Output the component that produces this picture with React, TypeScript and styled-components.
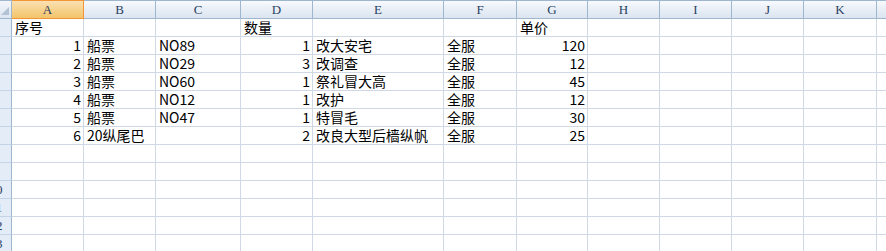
import styled, { createGlobalStyle } from "styled-components";

const GlobalStyle = createGlobalStyle`
  html, body {
    margin: 0;
    padding: 0;
    background: #ffffff;
    overflow: hidden;
  }
`;

// Column widths include the 1px gridline on the right edge
const COLUMNS = [
  { key: "A", width: 72 },
  { key: "B", width: 72 },
  { key: "C", width: 85 },
  { key: "D", width: 72 },
  { key: "E", width: 131 },
  { key: "F", width: 73 },
  { key: "G", width: 71 },
  { key: "H", width: 72 },
  { key: "I", width: 72 },
  { key: "J", width: 72 },
  { key: "K", width: 73 },
  { key: "L", width: 72 },
];

type CellValue = string | number | null;

const ROWS: CellValue[][] = [
  ["序号", null, null, "数量", null, null, "单价"],
  [1, "船票", "NO89", 1, "改大安宅", "全服", 120],
  [2, "船票", "NO29", 3, "改调查", "全服", 12],
  [3, "船票", "NO60", 1, "祭礼冒大高", "全服", 45],
  [4, "船票", "NO12", 1, "改护", "全服", 12],
  [5, "船票", "NO47", 1, "特冒毛", "全服", 30],
  [6, "20纵尾巴", null, 2, "改良大型后樯纵帆", "全服", 25],
];

const TOTAL_ROWS = 13;

const Sheet = styled.div`
  display: grid;
  grid-template-columns: 12px ${COLUMNS.map((c) => `${c.width}px`).join(" ")};
  grid-auto-rows: 18px;
  grid-template-rows: 19px;
  width: 886px;
  height: 251px;
  overflow: hidden;
  font-family: "Noto Sans CJK SC", "Noto Sans", sans-serif;
  font-size: 14px;
  color: #000000;
`;

const Corner = styled.div`
  box-sizing: border-box;
  display: flex;
  align-items: flex-end;
  justify-content: flex-end;
  padding: 0 2px 3px 0;
  background: linear-gradient(#f3f6fb, #dce5f1);
  border-top: 1px solid #9eb6ce;
  border-right: 1px solid #9eb6ce;
  border-bottom: 1px solid #9eb6ce;
`;

const ColHead = styled.div<{ $active?: boolean }>`
  box-sizing: border-box;
  display: flex;
  align-items: center;
  justify-content: center;
  font-family: "Liberation Serif", "DejaVu Serif", serif;
  font-size: 13px;
  padding-top: 1px;
  color: ${(p) => (p.$active ? "#1f3a5a" : "#27415f")};
  background: ${(p) =>
    p.$active
      ? "linear-gradient(#fae1b2, #f3c46a)"
      : "linear-gradient(#f7f9fd, #dbe4f0)"};
  border-top: 1px solid ${(p) => (p.$active ? "#f29536" : "#9eb6ce")};
  border-right: 1px solid ${(p) => (p.$active ? "#f29536" : "#9eb6ce")};
  border-bottom: 1px solid ${(p) => (p.$active ? "#f29536" : "#9eb6ce")};
`;

const RowHead = styled.div`
  box-sizing: border-box;
  overflow: hidden;
  display: flex;
  align-items: center;
  background: #e4ecf7;
  border-right: 1px solid #9eb6ce;
  border-bottom: 1px solid #c5d3e6;
`;

// Row numbers are centred in a wider header that is scrolled out of view
const RowNum = styled.span`
  flex: 0 0 30px;
  margin-left: -19px;
  text-align: center;
  font-family: "Liberation Serif", "DejaVu Serif", serif;
  font-size: 13px;
  color: #27415f;
`;

const Cell = styled.div<{ $align: "left" | "right" }>`
  box-sizing: border-box;
  display: flex;
  align-items: flex-end;
  justify-content: ${(p) => (p.$align === "right" ? "flex-end" : "flex-start")};
  padding: 0 2px 0 3px;
  white-space: nowrap;
  line-height: 17px;
  border-right: 1px solid #d0d7e5;
  border-bottom: 1px solid #d0d7e5;
`;

const SelectAll = () => (
  <svg width="8" height="8" viewBox="0 0 8 8">
    <polygon points="8,0 8,8 0,8" fill="#b4c2d6" />
  </svg>
);

export default function App() {
  return (
    <>
      <GlobalStyle />
      <Sheet>
        <Corner>
          <SelectAll />
        </Corner>
        {COLUMNS.map((c) => (
          <ColHead key={c.key} $active={c.key === "A"}>
            {c.key}
          </ColHead>
        ))}
        {Array.from({ length: TOTAL_ROWS }, (_, r) => {
          const values = ROWS[r] ?? [];
          return [
            <RowHead key={`h${r}`}>
              <RowNum>{r + 1}</RowNum>
            </RowHead>,
            ...COLUMNS.map((c, ci) => {
              const v = values[ci] ?? null;
              return (
                <Cell
                  key={`${r}-${c.key}`}
                  $align={typeof v === "number" ? "right" : "left"}
                >
                  {v}
                </Cell>
              );
            }),
          ];
        })}
      </Sheet>
    </>
  );
}
